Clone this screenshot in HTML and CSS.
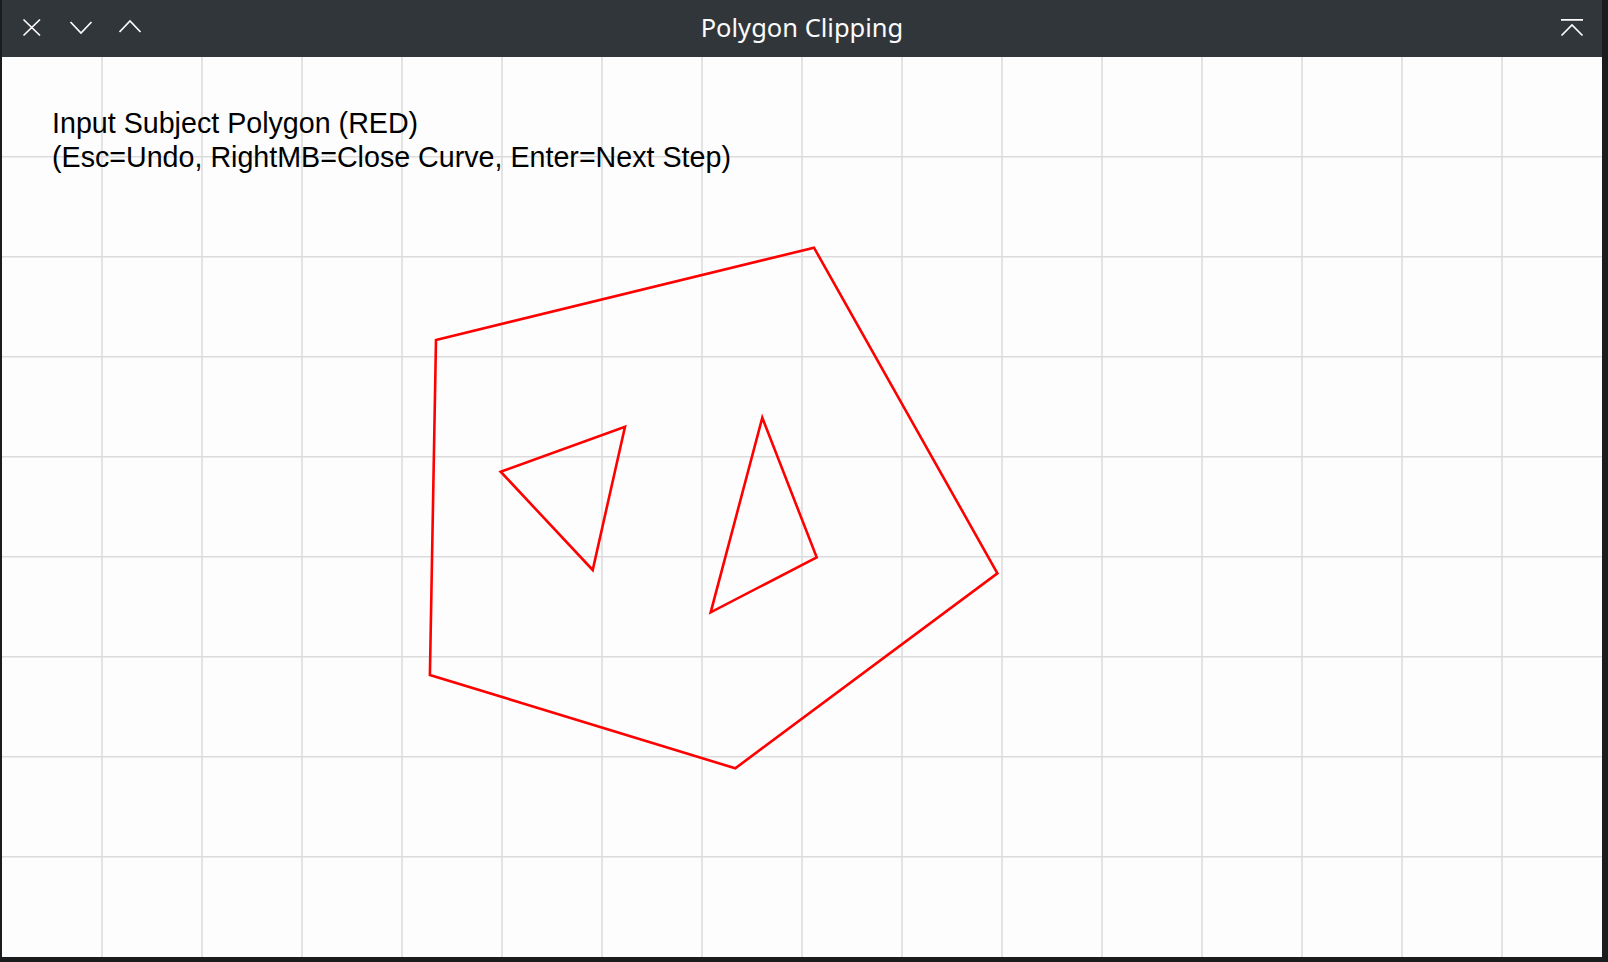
FILE: index.html
```html
<!DOCTYPE html>
<html lang="en">
<head>
<meta charset="utf-8">
<title>Polygon Clipping</title>
<link rel="stylesheet" href="styles.css">
</head>
<body>
<div class="window">
  <header class="titlebar">
    <div class="tb-left">
      <svg class="tb-icon" width="24" height="24" viewBox="0 0 24 24"><path d="M3.5 3.5 L20 19.5 M20 3.5 L3.5 19.5"/></svg>
      <svg class="tb-icon" width="24" height="24" viewBox="0 0 24 24"><path d="M1.5 6 L12 17 L22.5 6"/></svg>
      <svg class="tb-icon" width="24" height="24" viewBox="0 0 24 24"><path d="M1.5 16 L12 5 L22.5 16"/></svg>
    </div>
    <div class="tb-title">Polygon Clipping</div>
    <div class="tb-right">
      <svg class="tb-icon" width="24" height="24" viewBox="0 0 24 24"><path d="M1 3.8 L23 3.8 M1.5 19.5 L12 9 L22.5 19.5"/></svg>
    </div>
  </header>
  <main class="canvas">
    <svg class="drawing" width="1600" height="900" viewBox="0 0 1600 900">
      <g class="grid">
        <path d="M100 0V900M200 0V900M300 0V900M400 0V900M500 0V900M600 0V900M700 0V900M800 0V900M900 0V900M1000 0V900M1100 0V900M1200 0V900M1300 0V900M1400 0V900M1500 0V900"/>
        <path d="M0 99.7H1600M0 199.7H1600M0 299.7H1600M0 399.7H1600M0 499.7H1600M0 599.7H1600M0 699.7H1600M0 799.7H1600"/>
      </g>
      <g class="shapes">
        <polygon points="434,283 812,190.7 995.4,516.3 733.3,711.3 427.9,618"/>
        <polygon points="498.7,414.7 623,369.7 590.7,513"/>
        <polygon points="760.3,360.7 814.7,500.3 708.7,555.3"/>
      </g>
    </svg>
    <div class="prompt">
      <div>Input Subject Polygon (RED)</div>
      <div>(Esc=Undo, RightMB=Close Curve, Enter=Next Step)</div>
    </div>
  </main>
</div>
</body>
</html>
```
FILE: styles.css
```css
html, body {
  margin: 0;
  padding: 0;
  background: #1b1c1d;
  width: 1608px;
  height: 962px;
  overflow: hidden;
}

.window {
  margin-left: 2px;
  width: 1600px;
  display: flex;
  flex-direction: column;
}

.titlebar {
  height: 57px;
  background: #31363b;
  display: flex;
  align-items: center;
  position: relative;
  color: #fcfcfc;
}

.tb-left {
  display: flex;
  align-items: center;
  gap: 25px;
  padding-left: 18px;
  margin-top: -2px;
}

.tb-right {
  margin-left: auto;
  padding-right: 18.5px;
  margin-top: -2px;
  display: flex;
}

.tb-icon {
  display: block;
  fill: none;
  stroke: #fcfcfc;
  stroke-width: 1.7;
}

.tb-title {
  position: absolute;
  left: 0;
  right: 0;
  top: 0;
  height: 57px;
  line-height: 55px;
  text-align: center;
  font-family: "Noto Sans", "Open Sans", sans-serif;
  font-size: 25.5px;
  color: #fcfcfc;
  pointer-events: none;
}

.canvas {
  height: 900px;
  background: #fdfdfd;
  position: relative;
}

.drawing {
  position: absolute;
  left: 0;
  top: 0;
}

.grid path {
  fill: none;
  stroke: #dcdcdc;
  stroke-width: 1.6;
}

.shapes polygon {
  fill: none;
  stroke: #ff0000;
  stroke-width: 2.6;
  stroke-linejoin: miter;
}

.prompt {
  position: relative;
  padding: 50.2px 0 0 50px;
  font-family: "Liberation Sans", Arial, sans-serif;
  font-size: 28.65px;
  line-height: 33.4px;
  color: #000;
}
```
